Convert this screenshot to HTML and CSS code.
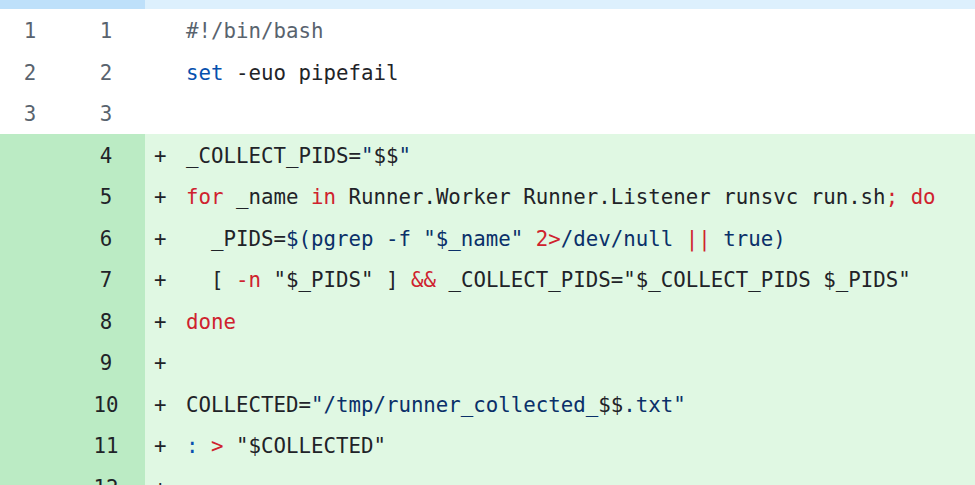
FILE: index.html
```html
<!DOCTYPE html>
<html>
<head>
<meta charset="utf-8">
<link rel="stylesheet" href="styles.css">
</head>
<body>
<div class="diff">
  <div class="row hunk">
    <div class="num"></div><div class="num"></div><div class="code"></div>
  </div>
  <div class="row ctx">
    <div class="num">1</div><div class="num">1</div>
    <div class="code"><span class="c">#!/bin/bash</span></div>
  </div>
  <div class="row ctx">
    <div class="num">2</div><div class="num">2</div>
    <div class="code"><span class="b">set</span> -euo pipefail</div>
  </div>
  <div class="row ctx">
    <div class="num">3</div><div class="num">3</div>
    <div class="code"></div>
  </div>
  <div class="row add">
    <div class="num"></div><div class="num">4</div>
    <div class="code"><span class="mk">+</span>_COLLECT_PIDS=<span class="s">"</span>$$<span class="s">"</span></div>
  </div>
  <div class="row add">
    <div class="num"></div><div class="num">5</div>
    <div class="code"><span class="mk">+</span><span class="k">for</span> _name <span class="k">in</span> Runner.Worker Runner.Listener runsvc run.sh<span class="k">;</span> <span class="k">do</span></div>
  </div>
  <div class="row add">
    <div class="num"></div><div class="num">6</div>
    <div class="code"><span class="mk">+</span>  _PIDS=<span class="s">$(pgrep -f "$_name" </span><span class="k">2&gt;</span><span class="s">/dev/null </span><span class="k">||</span><span class="s"> true)</span></div>
  </div>
  <div class="row add">
    <div class="num"></div><div class="num">7</div>
    <div class="code"><span class="mk">+</span>  [ <span class="k">-n</span> "$_PIDS" ] <span class="k">&amp;&amp;</span> _COLLECT_PIDS="$_COLLECT_PIDS $_PIDS"</div>
  </div>
  <div class="row add">
    <div class="num"></div><div class="num">8</div>
    <div class="code"><span class="mk">+</span><span class="k">done</span></div>
  </div>
  <div class="row add">
    <div class="num"></div><div class="num">9</div>
    <div class="code"><span class="mk">+</span></div>
  </div>
  <div class="row add">
    <div class="num"></div><div class="num">10</div>
    <div class="code"><span class="mk">+</span>COLLECTED=<span class="s">"/tmp/runner_collected_</span>$$<span class="s">.txt"</span></div>
  </div>
  <div class="row add">
    <div class="num"></div><div class="num">11</div>
    <div class="code"><span class="mk">+</span><span class="b">:</span> <span class="k">&gt;</span> "$COLLECTED"</div>
  </div>
  <div class="row add">
    <div class="num"></div><div class="num">12</div>
    <div class="code"><span class="mk">+</span></div>
  </div>
</div>
</body>
</html>
```

FILE: styles.css
```css
html, body {
  margin: 0;
  padding: 0;
  background: #ffffff;
  overflow: hidden;
}

.diff {
  width: 975px;
  font-family: "DejaVu Sans Mono", "Liberation Mono", monospace;
  font-size: 20.75px;
  color: #1f2328;
}

.row {
  display: grid;
  grid-template-columns: 60px 85px 1fr;
  height: 41.5px;
  line-height: 44.5px;
  overflow: hidden;
}

.row.hunk {
  height: 9px;
}

.hunk .num { background: #bee0fa; }
.hunk .code { background: #ddf0fd; }

.num {
  text-align: center;
  white-space: pre;
}

.num + .num {
  padding-left: 7px;
}

.ctx .num { color: #59636e; background: #ffffff; }
.ctx .code { background: #ffffff; }

.add .num { color: #1f2328; background: #bbebc4; }
.add .code { background: #e0f8e3; }

.code {
  position: relative;
  white-space: pre;
  padding-left: 41px;
  overflow: hidden;
}

.mk {
  position: absolute;
  left: 9px;
  top: 0;
}

.c { color: #59636e; }
.b { color: #0550ae; }
.k { color: #cf222e; }
.s { color: #0a3069; }
```
